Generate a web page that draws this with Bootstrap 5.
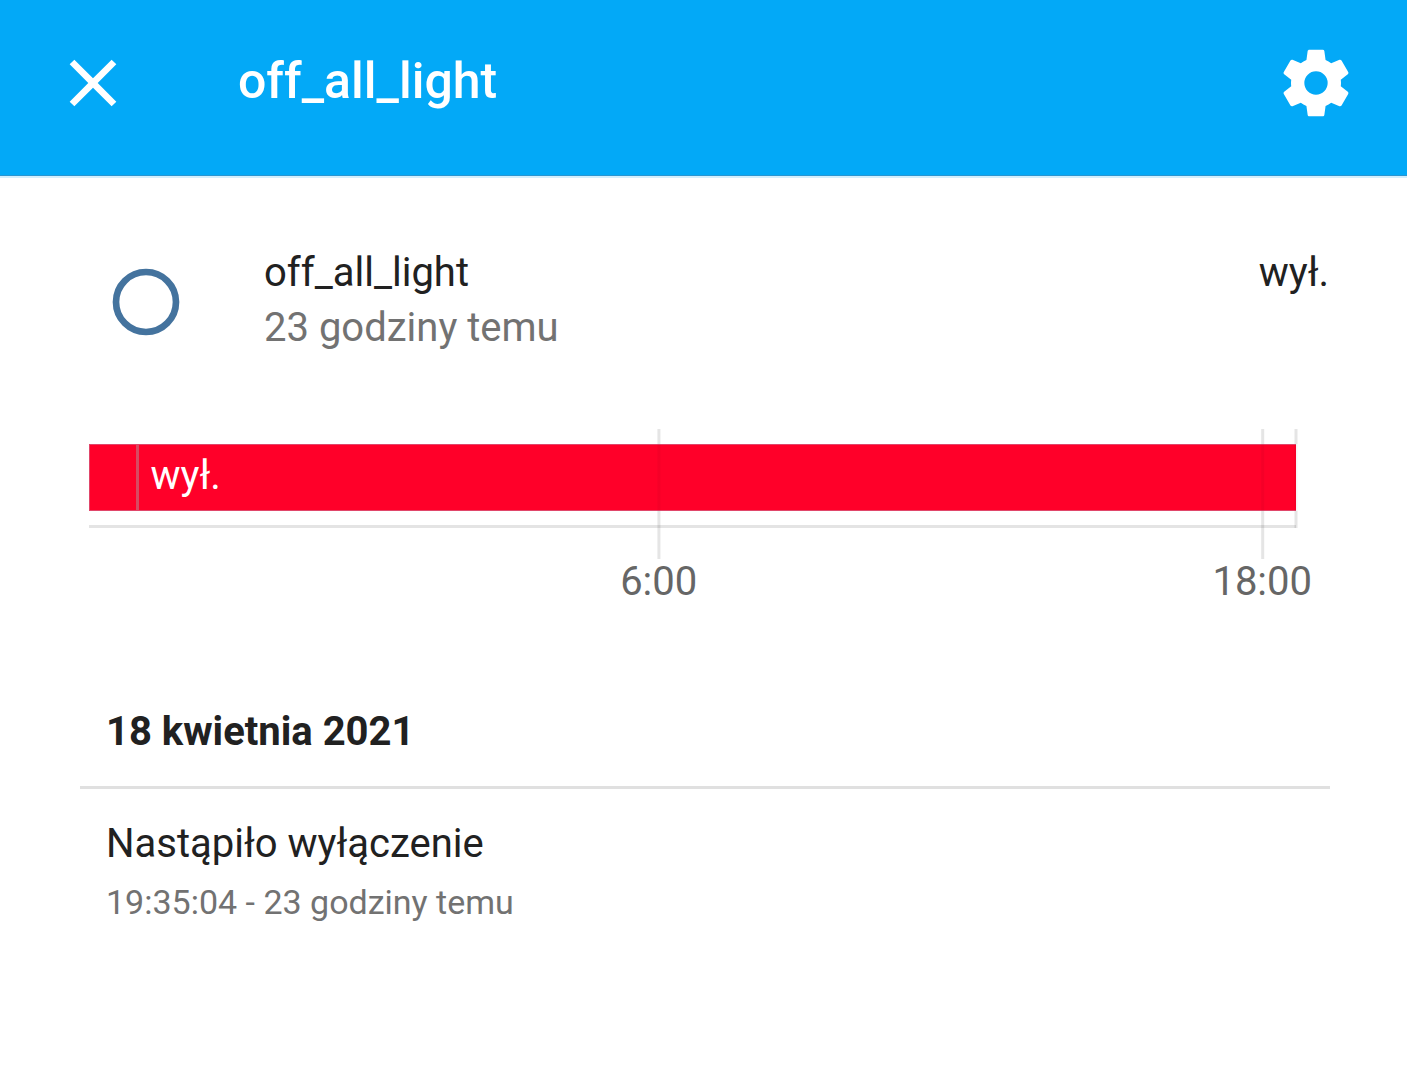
<!DOCTYPE html>
<html lang="pl">
<head>
<meta charset="utf-8">
<meta name="viewport" content="width=device-width, initial-scale=1">
<title>off_all_light</title>
<link href="https://cdn.jsdelivr.net/npm/bootstrap@5.3.0/dist/css/bootstrap.min.css" rel="stylesheet">
<style>
  body { font-family: Roboto, "Noto Sans", sans-serif; font-size: 40px; color: #212121; background: #fff; }
  .dialog-bar { height: 176px; padding: 0 51px 9px 53px; background: #03a9f7; border-bottom: 1px solid #2a95d0; box-shadow: 0 2px 0 #d3effd; }
  .dialog-title { font-size: 50px; line-height: 60px; font-weight: 500; margin: 0 0 4px 105px; }
  .mdi { width: 80px; height: 80px; display: block; fill: currentColor; }
  .dialog-body { padding: 69px 77px 0 80px; }
  .state-row { padding: 0 1px 0 26px; line-height: 55px; margin-bottom: 74px; }
  .state-icon { color: #44739e; margin: 17px 78px 0 0; }
  .muted-text { color: #727272; }
  .timeline { margin: 0 34px 0 9px; height: 174px; padding-top: 15px; }
  .timeline-bar { height: 67px; background: #ff0029; border: 1px solid #e0466a; border-right: 0; color: #fff; }
  .segment-start { border-right: 3px solid #d84a62; }
  .segment-main { padding-left: 11px; line-height: 61px; }
  .timeline-axis { height: 3px; margin-top: 14px; background: #e4e4e4; }
  .tick { top: 0; transform: translateX(-50%); line-height: 45px; color: #666; }
  .tick-line { width: 3px; height: 130px; background: linear-gradient(rgba(0,0,0,.1) 15px, rgba(0,0,0,.04) 15px 82px, rgba(0,0,0,.1) 82px); }
  .tick-end .tick-line { height: 99px; }
  .log-date { font-size: 40px; line-height: 48px; margin: 105px 0 0; padding: 0 26px 30px; border-bottom: 3px solid #e0e0e0; }
  .log-entry { padding: 27px 26px 0; line-height: 56px; }
  .log-time { font-size: 34px; line-height: 60px; }
</style>
<script src="https://cdn.jsdelivr.net/npm/bootstrap@5.3.0/dist/js/bootstrap.bundle.min.js"></script>
</head>
<body>
<header class="dialog-bar d-flex align-items-center text-white">
  <button type="button" class="btn p-0 border-0 text-white" aria-label="Zamknij">
    <svg class="mdi" viewBox="0 0 24 24"><path d="M19 6.41 17.59 5 12 10.59 6.41 5 5 6.41 10.59 12 5 17.59 6.41 19 12 13.41 17.59 19 19 17.59 13.41 12z"/></svg>
  </button>
  <h1 class="dialog-title flex-grow-1">off_all_light</h1>
  <button type="button" class="btn p-0 border-0 text-white" aria-label="Ustawienia">
    <svg class="mdi" viewBox="0 0 24 24"><path d="M12 15.5A3.5 3.5 0 0 1 8.5 12 3.5 3.5 0 0 1 12 8.5a3.5 3.5 0 0 1 3.5 3.5 3.5 3.5 0 0 1-3.5 3.5m7.43-2.53c.04-.32.07-.64.07-.97s-.03-.66-.07-1l2.11-1.63c.19-.15.24-.42.12-.64l-2-3.46c-.12-.22-.39-.31-.61-.22l-2.49 1c-.52-.39-1.06-.73-1.69-.98l-.37-2.65A.506.506 0 0 0 14 2h-4c-.25 0-.46.18-.5.42l-.37 2.65c-.63.25-1.17.59-1.69.98l-2.49-1c-.22-.09-.49 0-.61.22l-2 3.46c-.13.22-.07.49.12.64L4.57 11c-.04.34-.07.67-.07 1s.03.65.07.97l-2.11 1.66c-.19.15-.25.42-.12.64l2 3.46c.12.22.39.3.61.22l2.49-1.01c.52.4 1.06.74 1.69.99l.37 2.65c.04.24.25.42.5.42h4c.25 0 .46-.18.5-.42l.37-2.65c.63-.26 1.17-.59 1.69-.99l2.49 1.01c.22.08.49 0 .61-.22l2-3.46c.12-.22.07-.49-.12-.64z"/></svg>
  </button>
</header>

<main class="dialog-body">
  <section class="state-row d-flex align-items-start">
    <svg class="mdi state-icon flex-shrink-0" viewBox="0 0 24 24" aria-hidden="true"><circle cx="12" cy="12" r="9" fill="none" stroke="currentColor" stroke-width="2"/></svg>
    <div class="flex-grow-1">
      <div>off_all_light</div>
      <div class="muted-text">23 godziny temu</div>
    </div>
    <div>wył.</div>
  </section>

  <section class="timeline position-relative" aria-label="Historia">
    <div class="timeline-bar d-flex">
      <div class="segment-start" style="width: 4.1%"></div>
      <div class="segment-main flex-grow-1">wył.</div>
    </div>
    <div class="timeline-axis"></div>
    <div class="tick position-absolute d-flex flex-column align-items-center" style="left: 47.2%"><span class="tick-line"></span><span>6:00</span></div>
    <div class="tick position-absolute d-flex flex-column align-items-center" style="left: 97.2%"><span class="tick-line"></span><span>18:00</span></div>
    <div class="tick tick-end position-absolute" style="left: 100%"><div class="tick-line"></div></div>
  </section>

  <section>
    <h2 class="log-date fw-bold">18 kwietnia 2021</h2>
    <div class="log-entry">
      <div>Nastąpiło wyłączenie</div>
      <div class="log-time muted-text">19:35:04 - 23 godziny temu</div>
    </div>
  </section>
</main>
</body>
</html>
